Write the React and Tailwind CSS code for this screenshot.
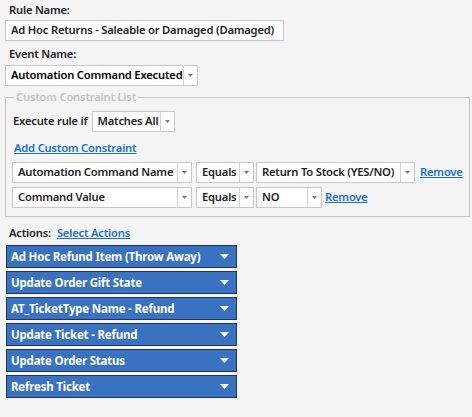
const font = { fontFamily: '"Noto Sans", "Open Sans", sans-serif' };

function Select({ value, className = "", textClass = "" }) {
  return (
    <div className={`flex h-[21px] bg-white border border-[#c8c8c8] ${className}`}>
      <div className={`flex-1 min-w-0 flex items-center pl-[5px] text-[#222] whitespace-nowrap ${textClass}`}>{value}</div>
      <div className="w-[14px] shrink-0 border-l border-[#d4d4d4] bg-white flex items-center justify-center">
        <svg width="5" height="3" viewBox="0 0 5 3"><path d="M0 0h5L2.5 3z" fill="#777" /></svg>
      </div>
    </div>
  );
}

const actions = [
  "Ad Hoc Refund Item (Throw Away)",
  "Update Order Gift State",
  "AT_TicketType Name - Refund",
  "Update Ticket - Refund",
  "Update Order Status",
  "Refresh Ticket",
];

export default function App() {
  return (
    <div className="w-[472px] h-[417px] bg-[#f4f4f4] text-[11.2px] font-semibold text-[#222] tracking-[-0.2px]" style={font}>
      <div className="pl-[9px] pt-[2px] leading-[16px]">Rule Name:</div>
      <div className="ml-[5px] mt-[2px] w-[279px] h-[21px] bg-white border border-[#c8c8c8] flex items-center px-[5px] whitespace-nowrap">
        Ad Hoc Returns - Saleable or Damaged (Damaged)
      </div>
      <div className="pl-[9px] mt-[5px] leading-[16px]">Event Name:</div>
      <div className="ml-[5px] mt-[3px] w-[193px]">
        <Select value="Automation Command Executed" textClass="text-black pl-[4px]" />
      </div>

      <fieldset className="mx-[5px] mt-[4px] w-[458px] h-[127px] border border-[#c8c8c8] px-[6px] pb-0">
        <legend className="px-[2px] ml-[2px] text-[#c2c2c2] leading-[14px]">Custom Constraint List</legend>
        <div className="flex items-center mt-[7px]">
          <span className="ml-[1px] mr-[4px]">Execute rule if</span>
          <Select value="Matches All" className="w-[83px]" />
        </div>
        <div className="mt-[8px] ml-[2px] leading-[16px]">
          <a className="text-[#1a6fd0] underline">Add Custom Constraint</a>
        </div>
        <div className="flex items-center mt-[6px]">
          <Select value="Automation Command Name" className="w-[180px]" />
          <Select value="Equals" className="w-[58px] ml-[4px]" />
          <Select value="Return To Stock (YES/NO)" className="w-[159px] ml-[2px]" />
          <a className="ml-[5px] text-[#1a6fd0] underline">Remove</a>
        </div>
        <div className="flex items-center mt-[4px]">
          <Select value="Command Value" className="w-[180px]" />
          <Select value="Equals" className="w-[58px] ml-[4px]" />
          <Select value="NO" className="w-[66px] ml-[2px]" />
          <a className="ml-[3px] text-[#1a6fd0] underline">Remove</a>
        </div>
      </fieldset>

      <div className="pl-[9px] mt-[8px] flex leading-[16px]">
        <span>Actions:</span>
        <a className="ml-[6px] text-[#1a6fd0] underline">Select Actions</a>
      </div>
      <div className="ml-[6px] mt-[4px] w-[231px] flex flex-col gap-[3px]">
        {actions.map((a) => (
          <div key={a} className="h-[23px] bg-[#3a72c2] border border-[#25334d] flex items-center pl-[4px] pr-[7px] text-white text-[11.5px] font-bold">
            <span className="flex-1 whitespace-nowrap">{a}</span>
            <svg width="9" height="5" viewBox="0 0 9 5"><path d="M0 0h9L4.5 5z" fill="#fff" /></svg>
          </div>
        ))}
      </div>
    </div>
  );
}
